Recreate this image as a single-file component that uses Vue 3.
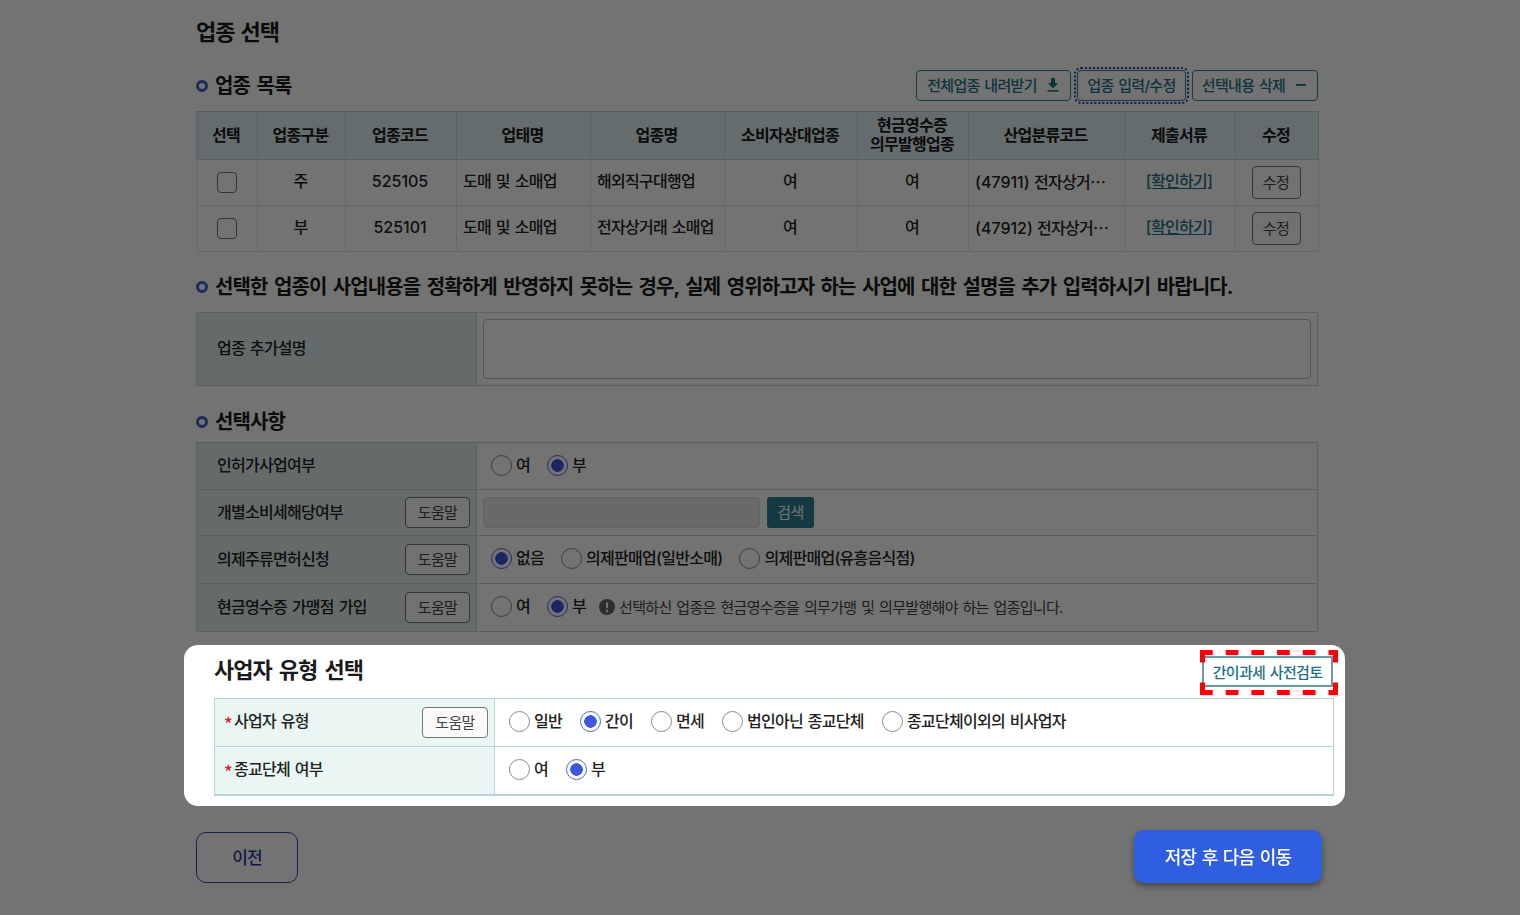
<script setup>
const columns = [
  { label: '선택', width: 61 },
  { label: '업종구분', width: 88 },
  { label: '업종코드', width: 111 },
  { label: '업태명', width: 134 },
  { label: '업종명', width: 134 },
  { label: '소비자상대업종', width: 133 },
  { label: '현금영수증\n의무발행업종', width: 111 },
  { label: '산업분류코드', width: 156 },
  { label: '제출서류', width: 111 },
  { label: '수정', width: 83 },
]

const rows = [
  { kind: '주', code: '525105', biz: '도매 및 소매업', name: '해외직구대행업', industry: '(47911)' },
  { kind: '부', code: '525101', biz: '도매 및 소매업', name: '전자상거래 소매업', industry: '(47912)' },
]

const typeOptions = [
  { label: '일반' },
  { label: '간이', checked: true },
  { label: '면세' },
  { label: '법인아닌 종교단체' },
  { label: '종교단체이외의 비사업자' },
]
</script>

<template>
  <div class="page">
    <h1 class="title">업종 선택</h1>

    <div class="section-head">
      <h2 class="section-title">업종 목록</h2>
      <div class="actions">
        <button class="line-btn w155" type="button">
          전체업종 내려받기
          <svg width="14" height="16" viewBox="0 0 14 16"><path d="M5 1h4v5h3L7 11.500 2 6h3z" fill="currentColor" /><rect x="1.500" y="13" width="11" height="1.600" fill="currentColor" /></svg>
        </button>
        <button class="line-btn w109 focused" type="button">업종 입력/수정</button>
        <button class="line-btn w126" type="button">
          선택내용 삭제
          <svg width="14" height="16" viewBox="0 0 14 16"><rect x="2" y="7" width="10" height="1.800" fill="currentColor" /></svg>
        </button>
      </div>
    </div>

    <table class="grid">
      <colgroup>
        <col v-for="col in columns" :key="col.label" :style="{ width: col.width + 'px' }" />
      </colgroup>
      <thead>
        <tr>
          <th v-for="col in columns" :key="col.label">{{ col.label }}</th>
        </tr>
      </thead>
      <tbody>
        <tr v-for="row in rows" :key="row.code">
          <td class="ctrl"><span class="checkbox"></span></td>
          <td class="center">{{ row.kind }}</td>
          <td class="center num">{{ row.code }}</td>
          <td>{{ row.biz }}</td>
          <td>{{ row.name }}</td>
          <td class="center">여</td>
          <td class="center">여</td>
          <td class="clip"><span class="num">{{ row.industry }}</span> 전자상거래 소매업</td>
          <td class="center"><a class="link" href="#">[확인하기]</a></td>
          <td class="center"><button class="help-btn small" type="button">수정</button></td>
        </tr>
      </tbody>
    </table>

    <h2 class="section-title second">선택한 업종이 사업내용을 정확하게 반영하지 못하는 경우, 실제 영위하고자 하는 사업에 대한 설명을 추가 입력하시기 바랍니다.</h2>

    <div class="form">
      <div class="form-row tall">
        <div class="label">업종 추가설명</div>
        <div class="value extra"><div class="textarea"></div></div>
      </div>
    </div>

    <h2 class="section-title third">선택사항</h2>

    <div class="form">
      <div class="form-row h47">
        <div class="label">인허가사업여부</div>
        <div class="value">
          <label class="radio"><input type="radio" name="permit" />여</label>
          <label class="radio"><input type="radio" name="permit" checked />부</label>
        </div>
      </div>
      <div class="form-row h46">
        <div class="label">개별소비세해당여부<button class="help-btn" type="button">도움말</button></div>
        <div class="value search">
          <div class="disabled-input"></div>
          <button class="search-btn" type="button">검색</button>
        </div>
      </div>
      <div class="form-row h48">
        <div class="label">의제주류면허신청<button class="help-btn" type="button">도움말</button></div>
        <div class="value">
          <label class="radio"><input type="radio" name="liquor" checked />없음</label>
          <label class="radio"><input type="radio" name="liquor" />의제판매업(일반소매)</label>
          <label class="radio"><input type="radio" name="liquor" />의제판매업(유흥음식점)</label>
        </div>
      </div>
      <div class="form-row h47">
        <div class="label">현금영수증 가맹점 가입<button class="help-btn" type="button">도움말</button></div>
        <div class="value">
          <label class="radio"><input type="radio" name="cash" />여</label>
          <label class="radio"><input type="radio" name="cash" checked />부</label>
          <span class="notice">
            <svg width="16" height="16" viewBox="0 0 16 16"><circle cx="8" cy="8" r="8" fill="#666" /><rect x="7" y="3" width="2" height="6.500" rx="1" fill="#fff" /><circle cx="8" cy="12" r="1.200" fill="#fff" /></svg>
            선택하신 업종은 현금영수증을 의무가맹 및 의무발행해야 하는 업종입니다.
          </span>
        </div>
      </div>
    </div>

    <div class="overlay"></div>

    <section class="spotlight">
      <div class="spot-head">
        <h2 class="spot-title">사업자 유형 선택</h2>
        <div class="review-wrap">
          <button class="review-btn" type="button">간이과세 사전검토</button>
          <svg class="dash-box" width="138" height="45" viewBox="0 0 138 45">
            <g stroke="#ff0000" stroke-width="5" fill="none">
              <line x1="0" y1="2.500" x2="138" y2="2.500" stroke-dasharray="12.700 13" />
              <line x1="0" y1="42.500" x2="138" y2="42.500" stroke-dasharray="12.700 13" />
              <line x1="2.500" y1="0" x2="2.500" y2="45" stroke-dasharray="12.500 20" />
              <line x1="135.500" y1="0" x2="135.500" y2="45" stroke-dasharray="12.500 20" />
            </g>
          </svg>
        </div>
      </div>
      <div class="form light">
        <div class="form-row h48">
          <div class="label narrow"><span class="req">*</span>사업자 유형<button class="help-btn" type="button">도움말</button></div>
          <div class="value">
            <label v-for="opt in typeOptions" :key="opt.label" class="radio">
              <input type="radio" name="biz-type" :checked="opt.checked" />{{ opt.label }}
            </label>
          </div>
        </div>
        <div class="form-row h47">
          <div class="label narrow"><span class="req">*</span>종교단체 여부</div>
          <div class="value">
            <label class="radio"><input type="radio" name="religion" />여</label>
            <label class="radio"><input type="radio" name="religion" checked />부</label>
          </div>
        </div>
      </div>
    </section>

    <div class="footer">
      <button class="prev-btn" type="button">이전</button>
      <button class="save-btn" type="button">저장 후 다음 이동</button>
    </div>
  </div>
</template>

<style>
html,
body {
  background: #fff;
  overflow: hidden;
}
</style>

<style scoped>
.page {
  width: 1122px;
  height: 915px;
  margin-left: 196px;
  padding-top: 17px;
  box-sizing: border-box;
  font-family: Inter, "Noto Sans CJK KR", sans-serif;
  font-size: 16px;
  color: #222;
}

.page * {
  letter-spacing: -0.045em;
  word-spacing: 0.08em;
}

button {
  font-family: inherit;
  cursor: pointer;
}

.page .num {
  letter-spacing: 0;
}

.overlay {
  position: fixed;
  inset: 0;
  background: rgba(0, 0, 0, 0.55);
  z-index: 1;
}

.title {
  margin: 0 0 23px;
  font-size: 22px;
  line-height: 30px;
  font-weight: 700;
  color: #1a1a1a;
}

.section-head {
  display: flex;
  align-items: center;
  justify-content: space-between;
  height: 31px;
  margin-bottom: 10px;
}

.section-title {
  margin: 0;
  font-size: 20px;
  line-height: 30px;
  font-weight: 700;
  word-spacing: 0.13em;
  color: #1a1a1a;
  display: flex;
  align-items: center;
  gap: 7px;
  white-space: nowrap;
}

.section-title::before {
  content: '';
  width: 12px;
  height: 12px;
  box-sizing: border-box;
  border: 3px solid #3f63c8;
  border-radius: 50%;
}

.section-title.second {
  margin: 20px 0 10px;
}

.section-title.third {
  margin: 21px 0 5px;
}

.actions {
  display: flex;
  gap: 6px;
}

.line-btn {
  height: 31px;
  padding: 0 0 2px;
  display: flex;
  align-items: center;
  justify-content: center;
  gap: 9px;
  background: #fff;
  border: 1px solid #2f7f90;
  border-radius: 4px;
  color: #1f7285;
  font-size: 15px;
  font-weight: 500;
}

.w155 {
  width: 155px;
}

.w109 {
  width: 109px;
}

.w126 {
  width: 126px;
}

.line-btn.focused {
  outline: 2px dotted #2b3fa8;
  outline-offset: 1px;
}

.grid {
  width: 1122px;
  table-layout: fixed;
  border-collapse: collapse;
  border: 1px solid #bfd0d3;
}

.grid th {
  height: 46px;
  padding: 0 2px 1px 0;
  background: #e0eff1;
  border: 1px solid #c6d6d8;
  font-size: 16px;
  line-height: 19px;
  font-weight: 600;
  color: #1a1a1a;
  white-space: pre-line;
}

.grid td {
  height: 42px;
  padding: 0 6px 3px;
  border: 1px solid #dfe5e6;
  line-height: 20px;
  font-weight: 500;
  white-space: nowrap;
}

.grid .center {
  padding-left: 5px;
  padding-right: 7px;
  text-align: center;
}

.grid .ctrl {
  text-align: center;
}

.grid .clip {
  padding-right: 14px;
  overflow: hidden;
  font-family: "Noto Sans CJK KR", sans-serif;
  text-overflow: ellipsis;
}

.clip .num {
  font-family: Inter, sans-serif;
}

.checkbox {
  display: block;
  width: 20px;
  height: 21px;
  margin: 0 auto -3px;
  box-sizing: border-box;
  background: #fff;
  border: 1px solid #777;
  border-radius: 4px;
}

.link {
  color: #1f7285;
  text-decoration: underline;
}

.form {
  border: 1px solid #c6d6d8;
}

.form-row {
  display: flex;
  border-bottom: 1px solid #c6d6d8;
  box-sizing: border-box;
}

.form-row:last-child {
  border-bottom: none;
}

.h46 {
  height: 46px;
}

.h47 {
  height: 47px;
}

.h48 {
  height: 48px;
}

.tall {
  height: 72px;
}

.label {
  width: 280px;
  flex: none;
  box-sizing: border-box;
  padding: 0 6px 4px 20px;
  display: flex;
  align-items: center;
  justify-content: space-between;
  background: #e0eeee;
  border-right: 1px solid #c6d6d8;
  font-weight: 500;
  white-space: nowrap;
}

.value {
  flex: 1;
  display: flex;
  align-items: center;
  padding: 0 14px 2px;
  gap: 17px;
}

.value.extra {
  padding: 0 6px;
}

.textarea {
  width: 100%;
  height: 60px;
  box-sizing: border-box;
  background: #fff;
  border: 1px solid #bbb;
  border-radius: 4px;
}

.help-btn {
  width: 65px;
  height: 31px;
  padding: 0 0 2px;
  margin-bottom: -4px;
  background: #fafafa;
  border: 1px solid #777;
  border-radius: 4px;
  color: #444;
  font-size: 15px;
}

.help-btn.small {
  width: 49px;
  height: 33px;
  display: block;
  margin: 0 auto -3px;
}

.radio {
  display: flex;
  align-items: center;
  gap: 4px;
  padding-bottom: 3px;
  font-size: 16px;
  font-weight: 500;
  white-space: nowrap;
}

.radio input {
  appearance: none;
  width: 21px;
  height: 21px;
  margin: 0 0 -3px;
  background: #fff;
  border: 1px solid #888;
  border-radius: 50%;
}

.radio input:checked {
  border-color: #4a62e0;
  background: radial-gradient(circle, #3f56e0 0 6px, #fff 6.500px);
}

.value.search {
  padding: 0 14px 0 6px;
  gap: 7px;
}

.disabled-input {
  width: 277px;
  height: 31px;
  background: #e8e8e8;
  border: 1px solid #dcdcdc;
  border-radius: 4px;
  box-sizing: border-box;
}

.search-btn {
  width: 47px;
  height: 31px;
  padding: 0 0 2px;
  background: #2a7f95;
  border: none;
  border-radius: 3px;
  color: #fff;
  font-size: 15px;
}

.notice {
  display: flex;
  align-items: center;
  gap: 4px;
  margin-left: -4px;
  font-size: 15px;
  color: #444;
  white-space: nowrap;
}

.spotlight {
  position: relative;
  z-index: 2;
  margin: 13px -27px 0 -12px;
  height: 161px;
  box-sizing: border-box;
  padding: 11px 11px 0 30px;
  background: #fff;
  border-radius: 14px;
}

.spot-head {
  display: flex;
  align-items: flex-start;
  justify-content: space-between;
  height: 31px;
  margin-bottom: 11px;
}

.spot-title {
  margin: 1px 0 0;
  font-size: 22px;
  line-height: 26px;
  font-weight: 700;
  word-spacing: 0.13em;
  color: #1a1a1a;
}

.review-wrap {
  position: relative;
  margin-right: 1px;
}

.review-btn {
  display: block;
  width: 131px;
  height: 31px;
  padding: 0;
  background: #fff;
  border: 2px solid #6a9aa6;
  color: #1f7285;
  font-size: 15px;
  font-weight: 500;
}

.dash-box {
  position: absolute;
  left: -2px;
  top: -6px;
}

.form.light {
  border: 1px solid #b7d3d8;
  border-width: 1px 1px 2px;
}

.form.light .form-row {
  border-bottom-color: #b7d3d8;
}

.form.light .label {
  background: #e9f6f4;
  border-right-color: #b7d3d8;
  justify-content: flex-start;
}

.form.light .value {
  gap: 18px;
}

.form.light .radio {
  padding-bottom: 4px;
}

.form.light .radio input {
  margin-bottom: -4px;
}

.label.narrow {
  padding-left: 9px;
  padding-bottom: 6px;
}

.label.narrow .help-btn {
  width: 66px;
  margin-left: auto;
  margin-bottom: -6px;
}

.req {
  color: #d8232f;
  width: 10px;
  margin-top: 7px;
  font-family: "Noto Sans CJK KR", sans-serif;
  font-size: 18px;
  line-height: 18px;
  font-weight: 500;
}

.footer {
  display: flex;
  align-items: flex-end;
  justify-content: space-between;
  margin: 24px -4px 0 0;
  height: 53px;
}

.prev-btn {
  width: 102px;
  height: 51px;
  padding: 0 0 2px;
  background: #fff;
  border: 1px solid #3a4fa8;
  border-radius: 10px;
  color: #2a3fa0;
  font-size: 17px;
  font-weight: 500;
}

.save-btn {
  position: relative;
  z-index: 2;
  width: 188px;
  height: 53px;
  padding: 0 0 2px;
  background: #2f5fe0;
  border: none;
  border-radius: 10px;
  box-shadow: 0 3px 6px rgba(0, 0, 0, 0.4);
  color: #fff;
  font-size: 18px;
  font-weight: 500;
}
</style>
